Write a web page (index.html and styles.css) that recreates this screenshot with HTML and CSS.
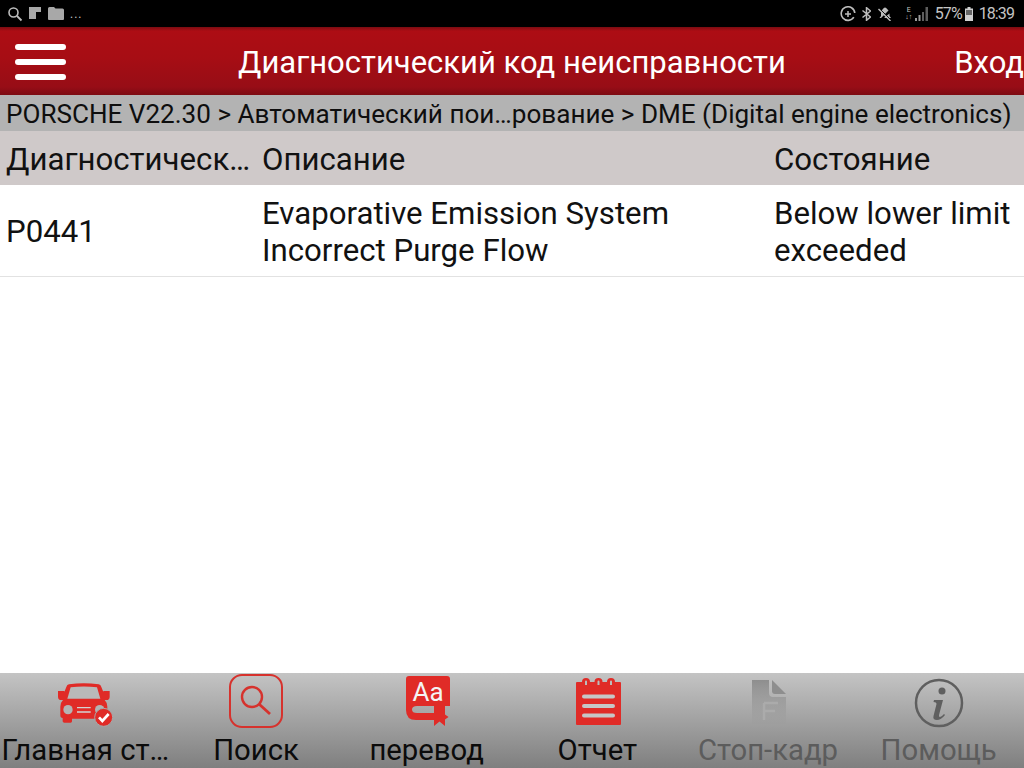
FILE: index.html
```
<!DOCTYPE html>
<html lang="ru">
<head>
<meta charset="utf-8">
<title>Диагностический код неисправности</title>
<link rel="stylesheet" href="styles.css">
</head>
<body>
<div class="screen">
  <div class="status">
    <div class="status-left">
      <svg width="16" height="16" viewBox="0 0 16 16"><circle cx="6.500" cy="6.500" r="4.500" fill="none" stroke="#bdbdbd" stroke-width="1.600"/><path d="M10 10l4.500 4.500" stroke="#bdbdbd" stroke-width="1.800"/></svg>
      <svg width="13" height="13" viewBox="0 0 13 13"><path d="M0 0h12v5H7v7H0z" fill="#a8a8a8"/></svg>
      <svg width="16" height="13" viewBox="0 0 16 13"><path d="M0 1.500Q0 0 1.500 0H6l1.500 1.500h7Q16 1.500 16 3v9q0 1-1 1H1q-1 0-1-1z" fill="#a8a8a8"/></svg>
      <span class="dots">...</span>
    </div>
    <div class="status-right">
      <svg class="s-sync" width="16" height="16" viewBox="0 0 16 16"><path d="M13.800 11.200A6.800 6.800 0 1 1 14.800 7" fill="none" stroke="#bdbdbd" stroke-width="1.600"/><path d="M8 5v6M5 8h6" stroke="#bdbdbd" stroke-width="1.500"/></svg>
      <svg class="s-bt" width="9" height="14" viewBox="0 0 9 14"><path d="M.5 3.500l8 6.500-4 3.300V.7l4 3.300-8 6.500" fill="none" stroke="#bdbdbd" stroke-width="1.500"/></svg>
      <svg class="s-mute" width="14" height="14" viewBox="0 0 14 14"><path d="M3 11l-1.500 0 1.500-2V6q0-3 2-4 .5-1.500 2-1.500T9 2q1 .5 1.500 1.500zM11.500 6.500V9l1.500 2H6z" fill="#bdbdbd"/><path d="M1 1l12 12" stroke="#000" stroke-width="1"/><path d="M.5 2l12 12" stroke="#bdbdbd" stroke-width="1.400"/></svg>
      <span class="net">E<br>↓↑</span>
      <svg class="s-sig" width="13" height="14" viewBox="0 0 13 14"><path d="M0 11h2v3H0zM3.500 8h2v6h-2z" fill="#9a9a9a"/><path d="M7 5h2v9H7zM10.500 0H13v14h-2.500z" fill="#5e5e5e"/></svg>
      <span class="pct">57%</span>
      <svg class="s-bat" width="8" height="14" viewBox="0 0 8 14"><path d="M2.500 0h3v1.500H8V14H0V1.500h2.500z" fill="#d0d0d0"/><path d="M1 3h6v5H1z" fill="#666"/></svg>
      <span class="clock">18:39</span>
    </div>
  </div>

  <header class="appbar">
    <div class="burger"><i></i><i></i><i></i></div>
    <h1 class="title">Диагностический код неисправности</h1>
    <span class="login">Вход</span>
  </header>

  <div class="crumb">PORSCHE V22.30 &gt; Автоматический пои…рование &gt; DME (Digital engine electronics)</div>

  <div class="row head">
    <div class="c1">Диагностическ…</div>
    <div class="c2">Описание</div>
    <div class="c3">Состояние</div>
  </div>
  <div class="row item">
    <div class="c1">P0441</div>
    <div class="c2">Evaporative Emission System<br>Incorrect Purge Flow</div>
    <div class="c3">Below lower limit<br>exceeded</div>
  </div>

  <main class="blank"></main>

  <footer class="tabs">
    <div class="tab">
      <div class="ib">
        <svg class="i-car" width="55" height="45" viewBox="0 0 165 135">
          <path d="M33 7Q77 0 122 7Q128 8 130 15L136 30V27H155V44Q155 54 145 54H140Q148 62 148 74V100Q148 108 141 108V118Q141 122 136 122H117Q113 122 113 118V110H42V118Q42 122 38 122H19Q14 122 14 118V108Q7 108 7 100V74Q7 62 15 54H10Q0 54 0 44V27H19V30L25 15Q27 8 33 7Z" fill="#e02b27"/>
          <path d="M38 16Q77 11 117 16L127 50H28Z" fill="#b9b9b9"/>
          <circle cx="30" cy="83" r="14" fill="#b4b4b4"/>
          <circle cx="125" cy="83" r="14" fill="#b4b4b4"/>
          <path d="M57 77H98M57 90H98" stroke="#d4d4d4" stroke-width="4"/>
          <circle cx="137" cy="106" r="27" fill="#e02b27" stroke="#a8a8a8" stroke-width="3"/>
          <path d="M123 106L133 117L152 96" fill="none" stroke="#fff" stroke-width="8"/>
        </svg>
      </div>
      <span class="lbl">Главная ст…</span>
    </div>
    <div class="tab">
      <div class="ib">
        <svg class="i-search" width="56" height="56" viewBox="0 0 56 56">
          <rect x="2" y="2" width="52" height="52" rx="12" fill="none" stroke="#d6322d" stroke-width="2"/>
          <circle cx="24" cy="24" r="10" fill="none" stroke="#d6322d" stroke-width="2.400"/>
          <path d="M31.500 31.500L42 41" stroke="#d6322d" stroke-width="2.800"/>
        </svg>
      </div>
      <span class="lbl">Поиск</span>
    </div>
    <div class="tab">
      <div class="ib">
        <svg class="i-book" width="45" height="50" viewBox="0 0 45 50">
          <path d="M3 0H41Q44 0 44 3V30H11Q6 30 6 33.500Q6 37 11 37H28V44H10Q0 44 0 34V3Q0 0 3 0Z" fill="#e02b27"/>
          <path d="M28 30H39V50L33.500 45.500L28 50Z" fill="#e02b27"/>
          <path d="M39 38.500L42.500 41L39 43.500Z" fill="#e02b27"/>
          <text x="22" y="25" class="aa">Aa</text>
        </svg>
      </div>
      <span class="lbl">перевод</span>
    </div>
    <div class="tab">
      <div class="ib">
        <svg class="i-note" width="45" height="47" viewBox="0 0 45 47">
          <path d="M1 4H6Q6 0 10 0T14 4H18.500Q18.500 0 22.500 0T26.500 4H31Q31 0 35 0T39 4H44Q45 4 45 5V46Q45 47 44 47H1Q0 47 0 46V5Q0 4 1 4Z" fill="#e02b27"/>
          <path d="M9 7V3.500Q9 2.500 10 2.500T11 3.500V7ZM21.500 7V3.500Q21.500 2.500 22.500 2.500T23.500 3.500V7ZM34 7V3.500Q34 2.500 35 2.500T36 3.500V7Z" fill="#bcbcbc"/>
          <path d="M8 18.500H37M8 28H37M8 37.500H37" stroke="#c6c6c6" stroke-width="4" stroke-linecap="round"/>
        </svg>
      </div>
      <span class="lbl">Отчет</span>
    </div>
    <div class="tab off">
      <div class="ib">
        <svg class="i-file" width="34" height="44" viewBox="0 0 34 44">
          <defs><linearGradient id="fade" x1="0" y1="0" x2="0" y2="1"><stop offset="0" stop-color="#8e8e8e"/><stop offset="1" stop-color="#9c9c9c" stop-opacity=".25"/></linearGradient></defs>
          <path d="M0 0H17V13Q17 17 21 17H34V44H0Z" fill="url(#fade)"/>
          <path d="M20 0L34 14H23Q20 14 20 11Z" fill="#8e8e8e"/>
          <path d="M12 23H26M12 23V40M12 31H23" stroke="#ababab" stroke-width="2.500" fill="none"/>
        </svg>
      </div>
      <span class="lbl">Стоп-кадр</span>
    </div>
    <div class="tab off">
      <div class="ib">
        <svg class="i-info" width="50" height="50" viewBox="0 0 50 50">
          <circle cx="25" cy="25" r="23" fill="none" stroke="#5f5f5f" stroke-width="2.500"/>
          <circle cx="28" cy="13" r="3.500" fill="#5f5f5f"/>
          <path d="M20 22h9l-4 15q-.5 2 1 2t4-3l1 1q-4 5-8 5-4.500 0-3.500-4l3-12q0-2-3-2z" fill="#5f5f5f"/>
        </svg>
      </div>
      <span class="lbl">Помощь</span>
    </div>
  </footer>
</div>
</body>
</html>
```
FILE: styles.css
```
* { box-sizing: border-box; }
html, body { margin: 0; padding: 0; }
body { font-family: Roboto, "Liberation Sans", sans-serif; background: #fff; color: #111; }
.screen { width: 1024px; height: 768px; display: flex; flex-direction: column; overflow: hidden; }

.status { height: 27px; background: #000; display: flex; justify-content: space-between; align-items: center; color: #c4c4c4; padding: 0 10px 0 7px; flex: none; }
.status-left, .status-right { display: flex; align-items: center; }
.status-left { gap: 6px; }
.dots { font-size: 12px; letter-spacing: 1px; margin-top: 1px; }
.s-bt { margin-left: 6px; }
.s-mute { margin-left: 7px; }
.net { font-size: 7px; line-height: 7px; width: 12px; text-align: center; margin-left: 11px; }
.s-sig { margin-left: 0; }
.pct { font-size: 16px; letter-spacing: -.8px; width: 25px; margin-left: 7px; white-space: nowrap; }
.s-bat { margin-left: 5px; }
.clock { font-size: 16px; letter-spacing: -.9px; margin-left: 6px; white-space: nowrap; }

.appbar { height: 68px; flex: none; display: grid; grid-template-columns: 1fr auto 1fr; align-items: center; color: #fff; padding: 2px 0 0 15px; background: linear-gradient(#7a0c12 0, #ad0d14 4px, #a70d14 30px, #970d16 60px, #7d0b12 68px); }
.burger { width: 51px; display: flex; flex-direction: column; gap: 9px; }
.burger i { display: block; height: 6px; border-radius: 3px; background: #fff; }
.title { margin: 2px 0 0 -15px; font-size: 31px; font-weight: 400; line-height: 40px; white-space: nowrap; }
.login { margin-top: 2px; font-size: 31px; line-height: 40px; white-space: nowrap; justify-self: end; }

.crumb { height: 36px; flex: none; background: #b3b3b3; font-size: 26.080px; line-height: 38px; padding-left: 6px; white-space: nowrap; color: #0e0e0e; }

.row { display: grid; grid-template-columns: 256px 512px 256px; align-items: center; flex: none; padding-top: 2px; }
.row > div { padding-left: 6px; font-size: 31.200px; line-height: 37px; white-space: nowrap; }
.head { height: 54px; background: #cfc9c9; }
.item { height: 92px; border-bottom: 1px solid #e2e2e2; }

.blank { flex: 1; background: #fff; }

.tabs { height: 95px; flex: none; display: grid; grid-template-columns: repeat(6, 1fr); background: linear-gradient(#c4c4c4, #7f7f7f); }
.tab { display: flex; flex-direction: column; align-items: center; color: #0b0b0b; }
.ib { height: 60px; width: 100%; display: flex; justify-content: center; align-items: flex-start; }
.i-car { margin-top: 9px; }
.i-search { margin-top: 0; }
.i-book { margin: 3px 0 0 3px; }
.i-note { margin: 5px 0 0 3px; }
.i-file { margin: 7px 0 0 3px; }
.i-info { margin-top: 5px; }
.lbl { font-size: 29.300px; line-height: 35px; text-align: center; white-space: nowrap; }
.off { color: #5c5c5c; }
.aa { font-family: Roboto, "Liberation Sans", sans-serif; font-size: 26px; fill: #f4f4f4; text-anchor: middle; }
```
